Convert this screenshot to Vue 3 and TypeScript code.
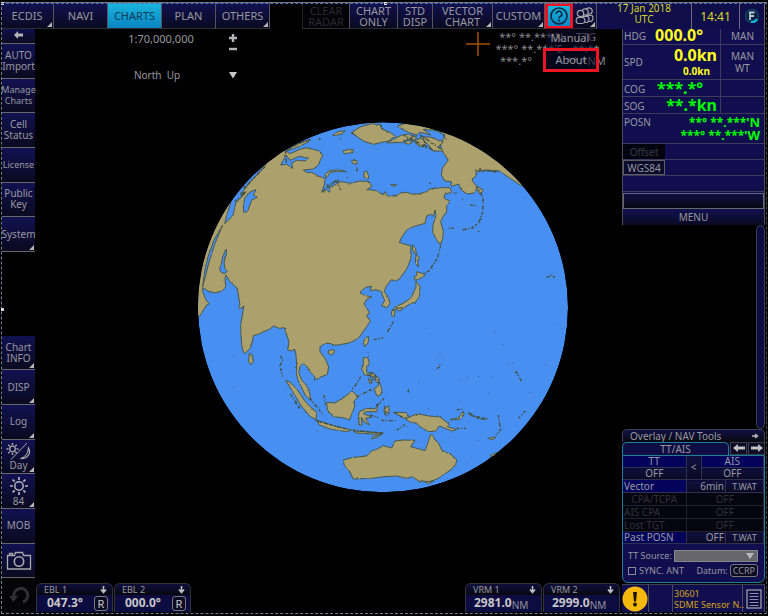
<script setup lang="ts">
interface TopItem {
  label: string[]
  kind?: 'active' | 'disabled' | 'gap'
  corner?: boolean
}
interface SideItem {
  label: string[]
  icon?: 'back' | 'day' | 'sun' | 'camera' | 'undo'
  corner?: boolean
  small?: boolean
  gap?: boolean
}

const topItems: TopItem[] = [
  { label: ['ECDIS'], corner: true },
  { label: ['NAVI'] },
  { label: ['CHARTS'], kind: 'active' },
  { label: ['PLAN'] },
  { label: ['OTHERS'], corner: true },
  { label: [], kind: 'gap' },
  { label: ['CLEAR', 'RADAR'], kind: 'disabled' },
  { label: ['CHART', 'ONLY'] },
  { label: ['STD', 'DISP'] },
  { label: ['VECTOR', 'CHART'], corner: true },
  { label: ['CUSTOM'], corner: true },
]

const sideItems: SideItem[] = [
  { label: [], icon: 'back' },
  { label: ['AUTO', 'Import'] },
  { label: ['Manage', 'Charts'], small: true },
  { label: ['Cell', 'Status'] },
  { label: ['License'], small: true },
  { label: ['Public', 'Key'] },
  { label: ['System'], corner: true },
  { label: [], gap: true },
  { label: ['Chart', 'INFO'], corner: true },
  { label: ['DISP'], corner: true },
  { label: ['Log'], corner: true },
  { label: ['Day'], icon: 'day', corner: true },
  { label: ['84'], icon: 'sun', corner: true },
  { label: ['MOB'] },
  { label: [], icon: 'camera' },
  { label: [], icon: 'undo' },
]

const eblBoxes = [
  { name: 'EBL 1', value: '047.3°' },
  { name: 'EBL 2', value: '000.0°' },
]
const vrmBoxes = [
  { name: 'VRM 1', value: '2981.0', unit: 'NM' },
  { name: 'VRM 2', value: '2999.0', unit: 'NM' },
]

const dimRows = ['CPA/TCPA', 'AIS CPA', 'Lost TGT']

const land: string[] = [
  // Eurasia with Africa on the western limb
  'M-40 700L22 607L30 603L40 585L50 570L58 567L48 555L38 530L38 518L55 528L75 534L98 527L107 515L105 490L108 480L120 500L142 520L145 540L150 570L146 575L150 582L162 571L152 630L153 660L155 690L160 712L166 715L180 700L187 680L190 662L205 658L240 642L250 633L268 640L283 638L290 660L297 680L293 705L306 708L315 703L318 720L320 750L319 775L324 795L332 812L345 840L362 856L360 838L355 820L345 806L335 795L326 772L330 755L338 745L350 753L358 768L375 785L373 795L388 788L412 778L416 755L405 730L390 710L390 695L405 685L420 685L430 690L445 690L480 683L505 670L516 655L530 635L541 618L530 603L538 592L522 567L530 553L545 546L523 541L510 532L527 517L545 514L540 528L558 524L575 530L577 540L584 556L575 572L590 578L600 566L595 548L583 530L588 515L604 494L618 498L630 490L650 462L663 430L662 392L645 388L628 382L636 365L650 345L670 335L705 325L710 303L722 298L730 304L735 285L738 302L729 330L728 352L740 375L752 390L758 370L760 350L752 320L760 303L770 290L770 272L780 258L762 250L765 237L785 232L780 218L755 218L720 222L710 230L690 236L670 238L650 232L630 234L620 242L592 243L585 230L578 240L562 228L545 225L530 224L546 214L537 200L510 198L480 205L455 200L430 205L415 222L395 232L403 210L405 190L385 183L365 172L352 173L340 165L370 162L385 150L390 138L398 120L388 108L350 98L330 103L300 116L288 108L240 90L100 150L-40 350Z',
  // North America
  'M752 86L765 60L720 40L900 40L1080 230L1000 216L960 190L928 168L890 165L858 171L858 182L846 195L858 212L880 225L870 238L860 222L850 235L830 236L814 225L806 207L785 214L784 200L765 198L754 180L757 160L775 135L765 120L755 105Z',
  // Arctic islands
  'M486 52L510 36L545 26L572 30L575 42L600 52L618 65L605 70L597 78L575 82L550 88L520 78L500 64Z',
  'M622 34L645 25L700 32L740 46L700 44L722 60L690 52L680 60L655 52Z',
  'M635 60L655 58L680 66L672 76L652 72L640 82L590 84L612 72Z',
  'M672 78L692 70L708 84L700 96L684 92Z',
  'M690 66L720 66L742 74L760 80L745 95L760 108L728 108L716 90Z',
  'M655 76L668 82L655 88L644 84Z',
  'M428 60L445 50L466 47L455 56L436 62Z',
  'M458 108L475 104L490 104L488 114L475 113L464 117Z',
  'M484 138L500 136L502 146L490 147Z',
  'M405 178L420 166L450 165L470 170L440 169L420 172L408 190Z',
  'M522 172L530 168L536 184L534 194L522 186Z',
  'M602 208L620 210L608 214Z',
  'M290 108L320 88L362 74L350 84L318 98Z',
  // Japan and Sakhalin
  'M667 388L676 400L680 420L690 430L682 434L686 455L676 445L678 420L668 405Z',
  'M680 470L692 474L706 478L696 488L676 496L672 486L680 482Z',
  'M678 498L690 514L688 545L676 562L660 566L640 580L622 580L608 588L616 575L640 565L655 555L665 545L672 530L678 515Z',
  'M606 586L616 588L612 606L604 600Z',
  'M622 580L636 578L634 586L622 588Z',
  // East and South-East Asia
  'M536 664L534 684L524 695L520 682L526 670Z',
  'M416 706L432 704L434 712L424 720L414 714Z',
  'M178 714L186 720L190 738L184 748L176 742Z',
  'M520 728L534 728L538 745L530 756L530 772L540 782L524 780L515 764L520 745Z',
  'M553 822L565 812L568 800L576 825L572 840L562 844L556 832Z',
  'M536 772L556 778L550 790Z',
  'M556 782L568 790L564 804L556 798Z',
  'M534 790L546 798L540 806Z',
  'M287 796L300 802L320 822L345 858L365 880L380 892L378 914L360 904L335 874L320 850L305 825Z',
  'M410 862L435 864L465 845L486 828L505 845L492 858L494 875L478 915L460 908L430 905L412 885Z',
  'M380 915L400 922L440 935L485 945L470 950L420 942L388 930Z',
  'M490 948L580 954L560 958L500 954Z',
  'M548 966L578 956L566 965L545 972Z',
  'M508 890L530 880L555 882L564 868L560 890L530 890L520 896L546 906L526 910L538 930L522 920L514 906L516 930L508 930L505 908Z',
  'M582 882L596 872L598 898L590 890L584 900Z',
  'M615 892L650 893L656 910L640 908L626 900Z',
  // New Guinea and its eastern islands
  'M646 912L672 900L685 897L718 903L750 906L768 920L778 928L772 935L800 944L786 948L765 940L748 933L738 948L715 950L690 935L680 925L658 920Z',
  'M780 914L806 908L820 888L822 900L808 914Z',
  'M893 970L918 966L910 974Z',
  'M835 892L850 905L840 900Z',
  'M900 1022L920 1012L912 1026Z',
  // Australia and Tasmania
  'M460 1035L485 1028L530 1023L545 1008L562 1002L580 992L605 999L615 978L640 975L675 976L662 995L705 1007L715 980L720 962L726 958L735 975L744 982L755 1005L785 1020L800 1034L797 1050L780 1066L745 1090L720 1100L685 1098L668 1085L650 1090L620 1083L585 1085L545 1090L490 1092L478 1068L463 1052Z',
  'M704 1100L732 1098L715 1106Z',
]

const water: string[] = [
  // Mediterranean and Black Sea
  'M232 142L195 172L150 222L125 255L110 300L104 326L128 303L134 280L138 262L166 235L152 238L185 196L205 175Z',
  // Caspian Sea
  'M164 250L180 231L198 224L190 240L202 247L186 254L172 290L161 292L160 270Z',
  // Persian Gulf
  'M108 402L98 425L94 448L89 460L92 472L105 476L112 468L105 462L102 442L110 412Z',
  // Red Sea
  'M98 330L72 375L54 425L44 470L38 515L46 485L58 438L74 388Z',
  // Baltic and White Sea
  'M272 150L288 120L300 136L328 124L356 130L345 138L320 136L305 145L308 160L290 148Z',
  'M398 228L425 208L446 194L438 208L418 218L420 232L410 226Z',
]

// Chains of small islands drawn as broken strokes
const isles: string[] = [
  'M858 215L872 232L880 255L878 290L868 320L856 332',
  'M852 338L815 345',
  'M792 340L776 340',
  'M852 166L920 168M868 164L925 172',
  'M752 392L742 430L718 466L704 476',
  'M610 620L590 655M552 674L580 668',
  'M272 722L278 735L270 752L278 785',
  'M512 785L496 812L486 822M500 846L546 822',
  'M545 770L552 795M556 780L566 805M540 780L545 805',
  'M302 838L330 882M360 850L400 900M402 840L405 870',
  'M540 900L566 908M574 916L618 918M620 945L645 930',
  'M584 874L590 904M560 872L582 850M610 892L650 914',
  'M838 894L860 905L892 912L870 912L846 902M800 940L828 940M800 884L818 882',
  'M925 900L932 945L918 960M986 910L1006 888',
  'M978 768L994 798M742 762L752 745M654 832L656 822',
  'M1070 488L1085 480L1094 488',
  'M290 104L330 84L360 74M484 52L500 66M640 60L700 95M660 70L735 108M690 60L750 100M640 80L680 60M700 65L710 105',
  'M760 60L770 75M780 58L745 48M570 28L580 45M286 108L290 150M135 260L165 232L150 235M440 200L452 225M410 215L440 195',
  'M225 155L160 222M792 232L800 235M814 255L818 252M840 270L860 272',
  'M450 70L454 72M385 72L392 72M500 160L502 172M470 186L474 188M718 205L722 205M864 348L868 350',
  'M488 945L580 955M380 918L470 942',
]

const specks = [
  [708, 640], [913, 653], [940, 688], [750, 716], [832, 787], [866, 786], [904, 786], [686, 803],
  [812, 799], [896, 833], [814, 860], [716, 880], [1018, 832], [1050, 835], [1066, 748], [953, 750],
  [130, 817], [133, 725], [54, 715], [382, 948], [830, 1042], [866, 976], [1100, 628], [1116, 640],
  [618, 658], [534, 712], [536, 722], [656, 900], [652, 934], [984, 965], [968, 744],
]
</script>

<template>
  <div class="screen">
    <svg class="globe" viewBox="-3 -6 1170 1170" role="img" aria-label="Globe chart">
      <defs>
        <clipPath id="disc"><circle cx="579" cy="577" r="555" /></clipPath>
        <filter id="coast" x="0" y="0" width="100%" height="100%" color-interpolation-filters="sRGB">
          <feTurbulence type="fractalNoise" baseFrequency="0.16" numOctaves="2" seed="4" />
          <feDisplacementMap in="SourceGraphic" scale="6" xChannelSelector="R" yChannelSelector="G" />
        </filter>
      </defs>
      <g clip-path="url(#disc)">
        <circle class="sea" cx="579" cy="577" r="555" />
        <g filter="url(#coast)">
          <path v-for="(d, i) in land" :key="'l' + i" class="land" :d="d" />
          <path v-for="(d, i) in water" :key="'w' + i" class="inlet" :d="d" />
          <path v-for="(d, i) in isles" :key="'i' + i" class="isle" :d="d" />
          <circle v-for="(p, i) in specks" :key="'s' + i" class="speck" :cx="p[0]" :cy="p[1]" r="2" />
        </g>
      </g>
    </svg>

    <header class="topbar">
      <template v-for="(item, i) in topItems" :key="i">
        <span v-if="item.kind === 'gap'" class="top-gap"></span>
        <button
          v-else
          class="key top-key"
          :class="[item.kind, { corner: item.corner }]"
          :disabled="item.kind === 'disabled'"
        >
          <span v-for="line in item.label" :key="line">{{ line }}</span>
        </button>
      </template>
      <div class="help-wrap">
        <button class="key help" aria-label="Help">
          <svg viewBox="0 0 20 20" width="20" height="20">
            <circle cx="10" cy="10" r="8" fill="none" stroke="#06283c" stroke-width="1.6" />
            <path d="M7.2 8a2.8 2.8 0 1 1 4 2.5c-.9.4-1.2.9-1.2 1.9" fill="none" stroke="#06283c" stroke-width="1.6" />
            <circle cx="10" cy="14.6" r="1.1" fill="#06283c" />
          </svg>
        </button>
        <nav class="menu">
          <button class="menu-item">Manual</button>
          <button class="menu-item marked">About</button>
        </nav>
      </div>
      <button class="key corner" aria-label="Users">
        <svg viewBox="0 0 20 20" width="20" height="20" fill="#12123c" stroke="#a5a5ac" stroke-width="1.2">
          <circle cx="14" cy="5" r="3.2" />
          <path d="M11 9.5h6c2 2 1 5-1 6h-4z" />
          <circle cx="10" cy="6" r="3.2" />
          <path d="M7 10.5h6c2 2 1 5-1 6H8z" />
          <circle cx="5.5" cy="7.5" r="3.2" />
          <path d="M2.500 11.500h6c2.500 2 1.500 6-1 6h-4c-3 0-3-4-1-6z" />
        </svg>
      </button>
      <div class="clock date"><span>17 Jan 2018</span><span>UTC</span></div>
      <div class="clock time">14:41</div>
      <div class="clock brand">
        <svg viewBox="0 0 18 18" width="18" height="18">
          <circle cx="9" cy="9" r="6.5" fill="#0a2340" stroke="#123d62" stroke-width="1.5" />
          <path d="M7 13V5.5h4.500M7 9h4" fill="none" stroke="#b9c9d6" stroke-width="1.8" />
          <path d="M8 14.500c3 .8 5-.3 6-2.500" fill="none" stroke="#19b5dc" stroke-width="2.2" />
        </svg>
      </div>
    </header>

    <aside class="sidebar">
      <template v-for="(item, i) in sideItems" :key="i">
        <span v-if="item.gap"></span>
        <button
          v-else
          class="key side-key"
          :class="{ corner: item.corner, small: item.small, faded: item.icon === 'undo' }"
          :aria-label="item.label.join(' ') || item.icon"
        >
          <svg v-if="item.icon === 'back'" viewBox="0 0 12 10" width="12" height="10">
            <path d="M1 5l4-4v2.500h5v3H5V9z" fill="#b4b4b8" />
          </svg>
          <svg v-else-if="item.icon === 'day'" viewBox="0 0 26 18" width="26" height="18" fill="none" stroke="#a8a8ac">
            <circle cx="6.5" cy="7" r="2.8" stroke-width="1.3" />
            <path d="M6.500 1v2M6.500 11v2M.5 7h2M10.500 7h2M2.300 2.800l1.400 1.400M9.300 9.800l1.400 1.400M2.300 11.200l1.400-1.400M9.300 4.200l1.400-1.400" stroke-width="1.5" />
            <path d="M5 17.500L21 1" stroke-width="1" />
            <path d="M22.500 6c3 5-1 11-8 10.500 4-1 7.500-5 8-10.500z" stroke-width="1.2" />
          </svg>
          <svg v-else-if="item.icon === 'sun'" viewBox="0 0 20 20" width="20" height="20" fill="none" stroke="#b4b4b8">
            <circle cx="10" cy="10" r="4.2" stroke-width="1.5" />
            <path d="M10 1v3M10 16v3M1 10h3M16 10h3M3.600 3.600l2.100 2.100M14.300 14.300l2.100 2.100M3.600 16.400l2.100-2.100M14.300 5.700l2.100-2.100" stroke-width="1.7" />
          </svg>
          <svg v-else-if="item.icon === 'camera'" viewBox="0 0 26 20" width="26" height="20" fill="none" stroke="#a8a8ac" stroke-width="1.3">
            <path d="M1.500 4.500h7l1-3h7l1 3h7v13.500h-23z" />
            <circle cx="13" cy="10.5" r="4.7" stroke-width="1.6" />
            <path d="M3.500 4V2.500h3V4" />
          </svg>
          <svg v-else-if="item.icon === 'undo'" viewBox="0 0 22 20" width="22" height="20">
            <path d="M6 12a7 7 0 1 1 9 5" fill="none" stroke="#303036" stroke-width="3" />
            <path d="M1 11h9l-4.500 6z" fill="#303036" />
          </svg>
          <span v-for="line in item.label" :key="line">{{ line }}</span>
        </button>
      </template>
    </aside>

    <main class="chart">
      <div class="chart-top">
        <div class="scale">
          <span class="scale-text">1:70,000,000</span>
          <div class="zoom-keys">
            <button class="bare" aria-label="Larger scale">
              <svg viewBox="0 0 10 10" width="10" height="10"><path d="M5 1v8M1 5h8" stroke="#b4b4b8" stroke-width="2.4" /></svg>
            </button>
            <button class="bare" aria-label="Smaller scale">
              <svg viewBox="0 0 10 10" width="10" height="10"><path d="M1 5h8" stroke="#b4b4b8" stroke-width="2.4" /></svg>
            </button>
          </div>
          <span class="mode">North&nbsp; Up</span>
          <button class="bare mode-key" aria-label="Orientation">
            <svg viewBox="0 0 10 8" width="10" height="8"><path d="M1 1h8L5 7.500z" fill="#c8c8c8" /></svg>
          </button>
        </div>
        <svg class="cross" viewBox="0 0 24 24" width="24" height="24"><path d="M12 0v24M0 12h24" stroke="#a85200" stroke-width="1.5" /></svg>
        <div class="readout">
          <span>**° **.***'N</span><span>TTG</span>
          <span>***° **.***'E</span><span>**:**</span>
          <span class="range">***.*°</span><span>**.*NM</span>
        </div>
      </div>

      <div class="chart-bottom">
        <section v-for="box in eblBoxes" :key="box.name" class="bearing">
          <div class="bearing-head"><span>{{ box.name }}</span>
            <svg viewBox="0 0 7 9" width="7" height="9"><path d="M3.500 1v6M1 4.500L3.500 7.500 6 4.500" fill="none" stroke="#c0c0c4" stroke-width="1.6" /></svg>
          </div>
          <div class="bearing-body"><b>{{ box.value }}</b><button class="reset">R</button></div>
        </section>
        <span class="spacer"></span>
        <section v-for="box in vrmBoxes" :key="box.name" class="bearing">
          <div class="bearing-head"><span>{{ box.name }}</span>
            <svg viewBox="0 0 7 9" width="7" height="9"><path d="M3.500 1v6M1 4.500L3.500 7.500 6 4.500" fill="none" stroke="#c0c0c4" stroke-width="1.6" /></svg>
          </div>
          <div class="bearing-body vrm"><b>{{ box.value }}</b><span>{{ box.unit }}</span></div>
        </section>
      </div>
    </main>

    <aside class="info">
      <section class="sensors">
        <div class="row hdg"><span>HDG</span><b class="yellow">000.0°</b><span class="src">MAN</span></div>
        <div class="row spd">
          <span>SPD</span>
          <div class="speeds"><b class="yellow">0.0kn</b><b class="yellow minor">0.0kn</b></div>
          <span class="src"><span>MAN</span><span>WT</span></span>
        </div>
        <div class="row cog"><span>COG</span><b class="green">***.*°</b><span class="src"></span></div>
        <div class="row sog"><span>SOG</span><b class="green">**.*kn</b><span class="src"></span></div>
        <div class="posn">
          <span>POSN</span>
          <div class="fix"><b>**° **.***'<i>N</i></b><b>***° **.***'<i>W</i></b></div>
        </div>
        <div class="line"><button class="chip off" disabled>Offset</button></div>
        <div class="line"><button class="chip">WGS84</button></div>
        <div class="line"></div>
        <div class="blank"></div>
        <button class="menu-key">MENU</button>
      </section>

      <div class="track"></div>

      <section class="tools">
        <div class="tools-head"><span>Overlay / NAV Tools</span>
          <svg viewBox="0 0 7 6" width="7" height="6"><path d="M0 3h5M3 1l2.500 2L3 5" fill="none" stroke="#b8b8bc" stroke-width="1.4" /></svg>
        </div>
        <div class="tabs">
          <div class="tab">TT/AIS</div>
          <button class="arrow" aria-label="Previous tab"><svg viewBox="0 0 12 8" width="12" height="8"><path d="M0 4l5-4v2.600h7v2.800H5V8z" fill="#c0c0c4" /></svg></button>
          <button class="arrow" aria-label="Next tab"><svg viewBox="0 0 12 8" width="12" height="8"><path d="M12 4L7 0v2.600H0v2.800h7V8z" fill="#c0c0c4" /></svg></button>
        </div>
        <div class="panel">
          <table>
            <colgroup><col class="c1" /><col class="c2" /><col class="c3" /><col class="c4" /></colgroup>
            <tbody>
              <tr><th class="bright mid">TT</th><td rowspan="2" class="mid shade">&lt;</td><th colspan="2" class="bright mid">AIS</th></tr>
              <tr><td class="mid shade">OFF</td><td colspan="2" class="mid shade">OFF</td></tr>
              <tr class="tall"><th class="bright">Vector</th><td colspan="2" class="end shade">6min</td><td class="mid shade tiny">T.WAT</td></tr>
              <tr v-for="name in dimRows" :key="name" class="dim tall">
                <th :class="{ mid: name === 'CPA/TCPA' }">{{ name }}</th><td colspan="3" class="mid">OFF</td>
              </tr>
              <tr><th class="bright">Past POSN</th><td colspan="2" class="end shade">OFF</td><td class="mid shade tiny">T.WAT</td></tr>
            </tbody>
          </table>
          <div class="source">
            <label for="tt-source">TT Source:</label>
            <span class="select-wrap">
              <select id="tt-source"><option></option></select>
              <svg viewBox="0 0 8 6" width="8" height="6"><path d="M0 0h8L4 6z" fill="#b9b9bd" /></svg>
            </span>
          </div>
          <div class="sync">
            <input id="sync" type="checkbox" /><label for="sync">SYNC. ANT</label>
            <span class="datum">Datum:</span><button class="ccrp">CCRP</button>
          </div>
        </div>
      </section>

      <section class="alert">
        <div class="alert-icon">
          <svg viewBox="0 0 26 26" width="26" height="26">
            <circle cx="13" cy="13" r="12.5" fill="#f5b80d" />
            <path d="M11 6h4l-1 9.500h-2z" fill="#1b1505" />
            <circle cx="13" cy="18.5" r="1.9" fill="#1b1505" />
          </svg>
        </div>
        <div></div>
        <div class="alert-text"><span>30601</span><span>SDME Sensor N..</span></div>
        <button class="list-key" aria-label="Alert list">
          <svg viewBox="0 0 16 20" width="16" height="20"><rect x="1" y="1" width="14" height="18" fill="#0d0d40" stroke="#a8a8ac" stroke-width="1.2" /><path d="M3.500 4.500h9M3.500 7.500h9M3.500 10.500h9M3.500 13.500h9M3.500 16.500h9" stroke="#8b8bab" /></svg>
        </button>
      </section>
    </aside>

    <div class="selection"><i></i><i></i><i></i></div>
  </div>
</template>

<style>
body {
  margin: 0;
  background: #000;
}
</style>

<style scoped>
.screen {
  position: relative;
  display: grid;
  grid-template-columns: 35px minmax(0, 1fr) 147px;
  grid-template-rows: 27px minmax(0, 1fr);
  min-height: 100vh;
  background: #000;
  color: #98989f;
  font-family: "Noto Sans", "Open Sans", sans-serif;
  font-size: 10px;
  line-height: 12px;
  overflow: hidden;
}
.screen * {
  box-sizing: border-box;
}
button {
  margin: 0;
  padding: 0;
  border: 0;
  background: none;
  color: inherit;
  font: inherit;
  white-space: nowrap;
}
svg {
  display: block;
  flex: none;
}
.globe {
  grid-area: 1 / 1 / -1 / -1;
  place-self: center;
  width: 390px;
  height: 390px;
}
.sea {
  fill: #478ff0;
}
.land {
  fill: #aca06c;
  stroke: #48584c;
  stroke-width: 3;
  stroke-linejoin: round;
}
.inlet {
  fill: #478ff0;
  stroke: #48584c;
  stroke-width: 3;
}
.isle {
  fill: none;
  stroke: #45503f;
  stroke-width: 4;
  stroke-dasharray: 9 4 4 5 13 6;
}
.speck {
  fill: #3a6a9c;
}

.key {
  position: relative;
  display: flex;
  flex-direction: column;
  align-items: center;
  justify-content: center;
  width: 100%;
  min-width: 0;
  background: linear-gradient(#111152, #0a0a20);
  border-right: 1px solid #55555c;
  border-bottom: 1px solid #2c2c34;
}
.corner::after {
  content: "";
  position: absolute;
  right: 1px;
  bottom: 1px;
  border: solid transparent;
  border-width: 0 0 5px 5px;
  border-bottom-color: #b4b4b4;
}

.topbar {
  grid-area: 1 / 1 / 2 / -1;
  z-index: 2;
  display: grid;
  grid-template-columns:
    minmax(0, 53fr) repeat(4, minmax(0, 54fr)) minmax(0, 32fr) minmax(0, 48fr) minmax(0, 48fr)
    minmax(0, 35fr) minmax(0, 60fr) minmax(0, 52fr) minmax(0, 28fr) minmax(0, 24fr)
    minmax(0, 95fr) minmax(0, 48fr) minmax(0, 25fr);
  padding: 3px 3px 0 1px;
}
.top-key {
  font-size: 11px;
  line-height: 11px;
}
.active {
  background: linear-gradient(#1ab6de, #0883c2);
  color: #0c3d58;
}
.disabled {
  background: #020208;
  color: #2b2b2f;
  border-left: 1px solid #222;
}
.help-wrap {
  position: relative;
  display: flex;
}
.help {
  background: linear-gradient(#18b4de, #0988c6);
  border: 3px solid #ee1424;
}
.menu {
  position: absolute;
  top: 25px;
  left: -2px;
  display: flex;
  flex-direction: column;
  align-items: flex-start;
  width: 56px;
}
.menu-item {
  width: 48px;
  height: 20px;
  margin-left: 3px;
  background: rgb(12 12 42 / 60%);
  color: #9a9aa2;
  font-size: 11px;
}
.menu-item.marked {
  width: 56px;
  height: 24px;
  margin-left: 0;
  border: 3px solid #ee1424;
}
.clock {
  display: flex;
  flex-direction: column;
  align-items: center;
  justify-content: center;
  min-width: 0;
  background: #0f0e4a;
  border-right: 1px solid #6b6b73;
  color: #d6d624;
  line-height: 11px;
}
.date {
  justify-content: flex-start;
}
.time {
  font-size: 12px;
}

.sidebar {
  grid-area: 2 / 1;
  display: grid;
  grid-template-rows:
    minmax(0, 51fr) repeat(6, minmax(0, 104fr)) minmax(0, 252fr) repeat(8, minmax(0, 104fr));
  padding: 0 0 3px 2px;
}
.side-key {
  border-right: 0;
  border-bottom: 1px solid #66666c;
  line-height: 11px;
}
.side-key.small {
  font-size: 9px;
}
.faded {
  background: #050508;
  border-bottom-color: #111;
}

.chart {
  grid-area: 2 / 2;
  display: flex;
  flex-direction: column;
  justify-content: space-between;
  padding: 0 1px 4px;
  z-index: 1;
}
.chart-top {
  display: flex;
  padding: 4px 14px 0 82px;
}
.scale {
  display: grid;
  grid-template-columns: 86px 62px;
  grid-template-rows: 28px 22px;
  justify-items: center;
}
.scale-text {
  font-size: 11px;
  line-height: 15px;
}
.mode {
  align-self: end;
  padding-right: 8px;
}
.zoom-keys {
  display: flex;
  flex-direction: column;
  gap: 1px;
  padding-top: 2px;
}
.mode-key {
  align-self: end;
  padding-bottom: 2px;
}
.scale .zoom-keys,
.scale .mode-key {
  margin-right: 4px;
}
.cross {
  margin: 1px 0 0 auto;
}
.readout {
  display: grid;
  grid-template-columns: 72px 40px;
  align-content: start;
  justify-items: end;
  margin-left: 4px;
  font-size: 11px;
  line-height: 12px;
  white-space: nowrap;
  color: #88888e;
}
.readout > :nth-child(1),
.readout > :nth-child(3) {
  padding-right: 3px;
}
.readout > :nth-child(even) {
  justify-self: center;
}
.readout .range {
  justify-self: start;
  padding-left: 6px;
}
.chart-bottom {
  display: flex;
  gap: 1px;
}
.spacer {
  flex: 1;
}
.bearing {
  width: 77px;
  height: 29px;
  border: 1px solid #34343e;
  border-bottom: 0;
  border-radius: 6px 6px 0 0;
  background: #0d0c40;
  overflow: hidden;
}
.bearing-head {
  display: flex;
  justify-content: space-between;
  align-items: center;
  height: 11px;
  padding: 0 5px 0 7px;
  background: linear-gradient(#0f0f3c, #07070f);
  font-size: 9px;
  line-height: 11px;
}
.bearing-body {
  display: flex;
  align-items: flex-start;
  justify-content: space-between;
  padding: 1px 4px 0 10px;
  color: #c6c6ca;
}
.bearing-body b {
  font-size: 12px;
  line-height: 14px;
}
.bearing-body.vrm {
  justify-content: flex-start;
  padding-left: 8px;
}
.vrm span {
  padding-top: 3px;
  color: #94949a;
  font-size: 10px;
}
.reset {
  width: 14px;
  height: 15px;
  border: 1px solid #777780;
  border-radius: 3px;
  background: #0b0b24;
  font-size: 11px;
  line-height: 13px;
}

.info {
  grid-area: 2 / 3;
  display: flex;
  flex-direction: column;
  padding: 0 3px 4px 1px;
  z-index: 1;
}
.sensors {
  border: solid #4b4b58;
  border-width: 0 1px;
  background: #100e4e;
}
.row {
  display: grid;
  grid-template-columns: 26px 1fr 44px;
  align-items: center;
  border-bottom: 1px solid #3c3b5c;
  padding-left: 1px;
}
.row b {
  justify-self: end;
  margin-right: 3px;
  font-size: 16px;
  line-height: 17px;
}
.row .src {
  display: flex;
  flex-direction: column;
  align-items: center;
  justify-content: center;
  align-self: stretch;
  border-left: 1px solid #3c3b5c;
}
.hdg {
  height: 18px;
}
.spd {
  height: 35px;
}
.cog,
.sog {
  height: 17px;
}
.row.hdg b,
.row.cog b {
  margin-right: 17px;
}
.yellow {
  color: #ffff1e;
}
.green {
  color: #0f0;
}
.speeds {
  display: flex;
  flex-direction: column;
  align-items: flex-end;
}
.row .speeds .minor {
  margin-right: 10px;
  font-size: 10px;
  line-height: 14px;
}
.posn {
  display: flex;
  justify-content: space-between;
  height: 30px;
  padding: 2px 4px 0 1px;
  border-bottom: 1px solid #3c3b5c;
}
.fix {
  display: flex;
  flex-direction: column;
  align-items: flex-end;
  color: #0f0;
}
.fix b {
  font-size: 12px;
  line-height: 13px;
  white-space: nowrap;
}
.fix i {
  font-size: 13px;
  font-style: normal;
}
.line {
  display: flex;
  height: 16px;
  border-bottom: 1px solid #3c3b5c;
}
.chip {
  width: 42px;
  border: 1px solid #5c5c66;
  background: #0a0a2c;
}
.chip.off {
  border: 0;
  background: #040410;
  color: #3a3a40;
}
.blank {
  height: 16px;
  margin-top: 1px;
  border: 1px solid #66666e;
  background: linear-gradient(#0f0f46, #080812);
}
.menu-key {
  width: 100%;
  height: 16px;
  background: linear-gradient(#111152, #0a0a20);
}
.track {
  flex: 1;
  align-self: flex-end;
  width: 9px;
  border: 1px solid #3e3e4c;
  border-radius: 5px;
  background: #0d0c40;
}
.tools-head {
  display: flex;
  align-items: center;
  justify-content: space-between;
  height: 13px;
  padding: 0 5px 0 7px;
  border: 1px solid #3e3e4c;
  border-bottom: 0;
  border-radius: 5px 5px 0 0;
  background: linear-gradient(#101046, #08080f);
}
.tabs {
  display: flex;
  background: #0b0b30;
}
.tab {
  flex: 1;
  border: 1px solid #1c7d9d;
  border-bottom: 0;
  border-radius: 5px 5px 0 0;
  background: #0e0e44;
  text-align: center;
}
.arrow {
  display: flex;
  align-items: center;
  justify-content: center;
  width: 17px;
  margin-left: 1px;
  border: 1px solid #3e3e4c;
  background: #0b0b24;
}
.panel {
  border: 1px solid #1c7d9d;
  border-radius: 0 0 6px 6px;
  background: #100e4e;
}
table {
  width: 100%;
  table-layout: fixed;
  border-collapse: collapse;
  font-size: 10px;
  line-height: 11px;
}
.c1 {
  width: 63px;
}
.c2 {
  width: 15px;
}
.c4 {
  width: 38px;
}
th,
td {
  height: 12px;
  padding: 0 1px;
  border: 1px solid #303050;
  border-left-width: 0;
  border-top-width: 0;
  font-weight: 400;
  text-align: left;
  white-space: nowrap;
}
.tall th,
.tall td {
  height: 13px;
}
th.bright {
  background: #03035c;
}
.shade {
  background: linear-gradient(#0f0f40, #0a0a22);
}
th.mid,
td.mid {
  text-align: center;
}
td.end {
  text-align: right;
}
td.tiny {
  font-size: 9px;
}
.dim th,
.dim td {
  background: #05050f;
  border-color: #23232e;
  color: #303038;
}
.source {
  display: flex;
  align-items: center;
  gap: 2px;
  padding: 6px 6px 0 5px;
  font-size: 9px;
}
.select-wrap {
  position: relative;
  flex: 1;
  height: 12px;
}
.select-wrap select {
  display: block;
  width: 100%;
  height: 12px;
  padding: 0;
  border: 1px solid #85858c;
  border-radius: 0;
  background: #66666c;
  appearance: none;
}
.select-wrap svg {
  position: absolute;
  top: 3px;
  right: 4px;
}
.sync {
  display: flex;
  align-items: center;
  padding: 2px 6px 5px 5px;
  font-size: 9px;
}
.sync input {
  width: 8px;
  height: 8px;
  margin: 0 3px 0 0;
  border: 1px solid #8a8a92;
  background: transparent;
  appearance: none;
}
.datum {
  margin-left: auto;
  margin-right: 2px;
}
.ccrp {
  height: 13px;
  padding: 0 2px;
  border: 1px solid #777780;
  border-radius: 3px;
  background: #0b0b24;
  line-height: 11px;
}
.alert {
  display: grid;
  grid-template-columns: 27px 24px minmax(0, 1fr) 22px;
  height: 28px;
  margin-top: 1px;
  border-top: 1px solid #3e3e4c;
  background: #100e4e;
}
.alert > * {
  display: flex;
  align-items: center;
  justify-content: center;
  border-right: 1px solid #4a4a58;
}
.alert .alert-text {
  flex-direction: column;
  align-items: flex-start;
  padding-left: 1px;
  color: #d2a41c;
  font-size: 9px;
  line-height: 11px;
  white-space: nowrap;
}

/* Dashed marquee with its handles, laid over the whole screen */
.selection {
  position: absolute;
  inset: 2px 1px 2px;
  z-index: 3;
  border: 1px dashed #6d8096;
  border-right-color: #45484e;
  pointer-events: none;
}
.selection::before {
  content: "";
  position: absolute;
  inset: -1px -1px auto;
  border-top: 1px solid #77797e;
}
.selection::after {
  content: "";
  position: absolute;
  inset: 0 -1px auto;
  border-top: 1px dashed #4a72b4;
}
.selection i {
  position: absolute;
  top: -1px;
  left: -1px;
  width: 3px;
  height: 3px;
  background: #d8d8d8;
}
.selection i:nth-child(2) {
  left: 50%;
}
.selection i:nth-child(3) {
  top: 50%;
}
</style>
